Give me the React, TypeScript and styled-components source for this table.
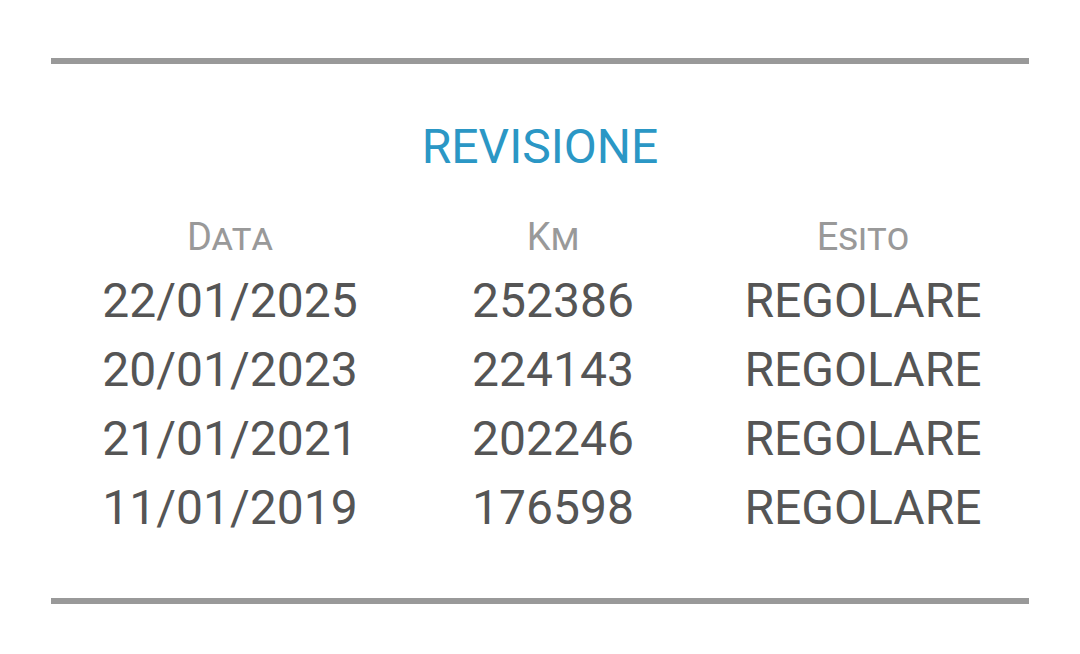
import styled, { createGlobalStyle } from 'styled-components'

const GlobalStyle = createGlobalStyle`
  html, body {
    margin: 0;
    padding: 0;
    background: #ffffff;
  }
  body {
    font-family: Roboto, "Noto Sans", "Liberation Sans", sans-serif;
  }
`

const Page = styled.main`
  width: 1080px;
  height: 654px;
  box-sizing: border-box;
  padding: 58px 51px 0;
  display: flex;
  flex-direction: column;
`

const Divider = styled.hr`
  width: 978px;
  height: 6px;
  margin: 0;
  border: none;
  background: #999999;
`

const Title = styled.h2`
  margin: 55px 0 38px;
  font-size: 48px;
  font-weight: 400;
  line-height: 56px;
  text-align: center;
  color: #2b97c5;
`

const Table = styled.div`
  display: grid;
  grid-template-columns: 358px 288px 332px;
  justify-items: center;
  margin-bottom: 56px;
`

const HeadCell = styled.div`
  font-size: 38px;
  line-height: 48px;
  font-variant: small-caps;
  color: #999999;
  margin-bottom: 5px;
`

const Cell = styled.div`
  font-size: 48px;
  line-height: 69px;
  color: #555555;
`

const rows = [
  ['22/01/2025', '252386', 'REGOLARE'],
  ['20/01/2023', '224143', 'REGOLARE'],
  ['21/01/2021', '202246', 'REGOLARE'],
  ['11/01/2019', '176598', 'REGOLARE'],
]

export default function App() {
  return (
    <>
      <GlobalStyle />
      <Page>
        <Divider />
        <Title>REVISIONE</Title>
        <Table>
          <HeadCell>Data</HeadCell>
          <HeadCell>Km</HeadCell>
          <HeadCell>Esito</HeadCell>
          {rows.map((row) =>
            row.map((value, i) => <Cell key={row[0] + i}>{value}</Cell>),
          )}
        </Table>
        <Divider />
      </Page>
    </>
  )
}
